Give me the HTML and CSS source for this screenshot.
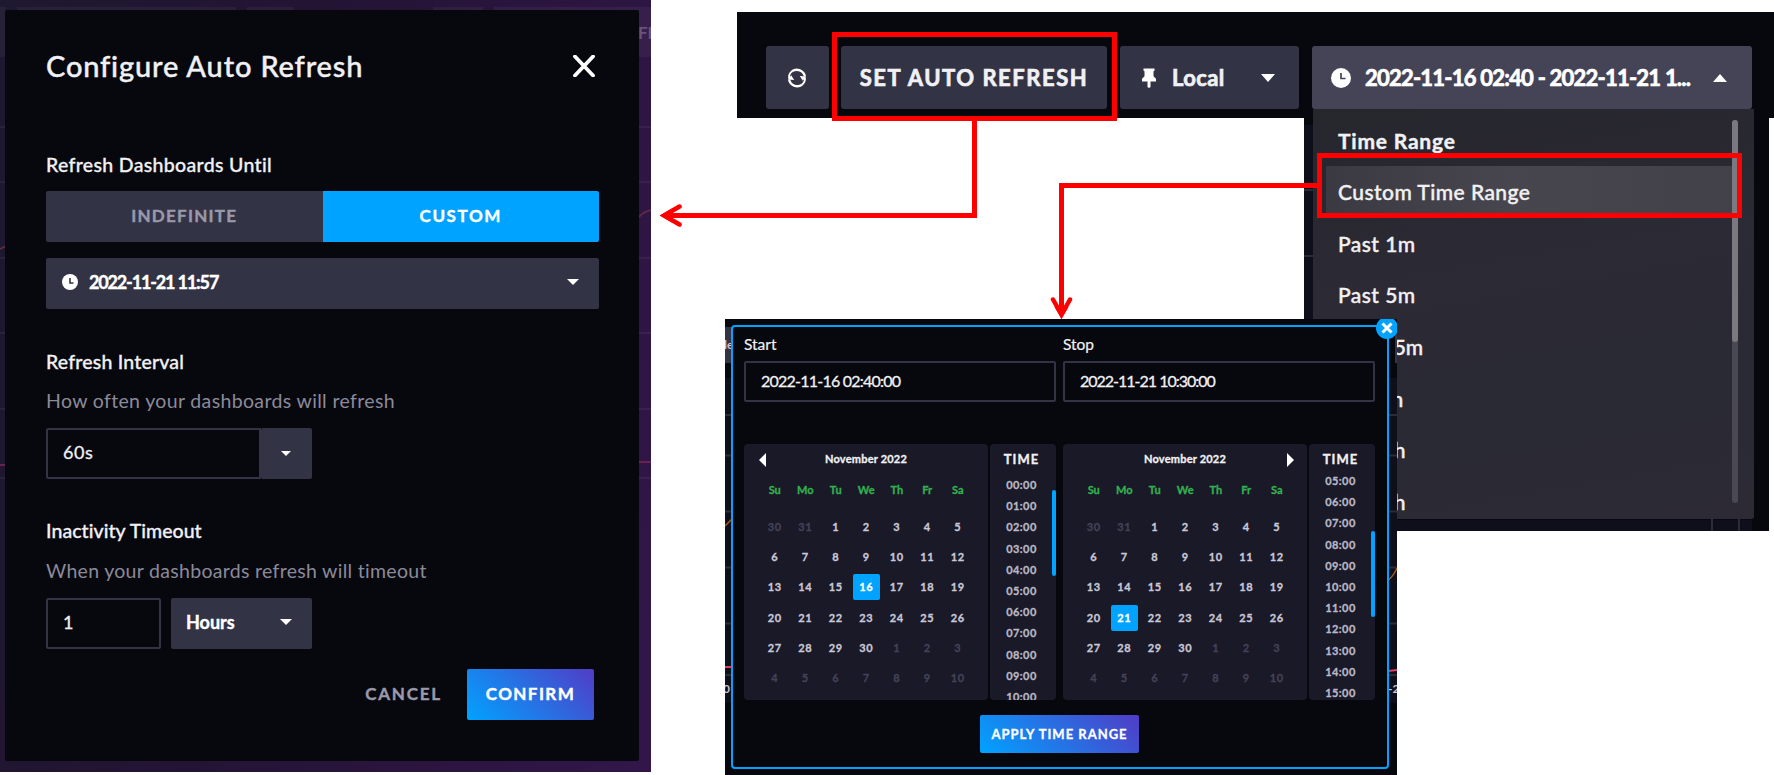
FILE: index.html
```
<!doctype html>
<html lang="en">
<head>
  <meta charset="UTF-8">
  <title>Auto Refresh</title>
  <link rel="stylesheet" href="styles.css">
</head>
<body>
  <div class="board">

    <!-- auto refresh dialog -->
    <div class="overlay">
      <svg class="overlay-bg" width="651" height="772" fill="none">
        <g fill="#fff" fill-opacity=".045">
          <path d="M0 7h6v50H0zM17 7h219v4H17zM247 7h47v4h-47zM433 7h50v4h-50zM494 7h157v50H494z"/>
        </g>
        <path d="M0 127h651M0 182h651M0 258h651M0 333h651M0 409h651M0 478h651" stroke="#fff" stroke-opacity=".05" stroke-width="2"/>
        <path d="M0 249l6-3M639 217q4-5 12-7" stroke="#6b2b45" stroke-width="1.5"/>
        <path d="M0 465h6M639 462h12" stroke="#6c2050" stroke-width="2"/>
      </svg>
      <span class="overlay-text">FR</span>
      <div class="modal">
        <div class="modal-head">
          <h1>Configure Auto Refresh</h1>
          <svg class="close" width="22" height="22" viewBox="0 0 22 22"><path d="M2 1.5L20 20.5M20 1.5L2 20.5" stroke="#fff" stroke-width="3.8" stroke-linecap="round"/></svg>
        </div>
        <h2>Refresh Dashboards Until</h2>
        <div class="toggle">
          <div>INDEFINITE</div>
          <div class="on">CUSTOM</div>
        </div>
        <div class="select until">
          <svg width="16" height="16" viewBox="0 0 16 16"><circle cx="8" cy="8" r="8" fill="#fff"/><path d="M8 4v5h3.5" stroke="#333346" stroke-width="1.6" fill="none"/></svg>
          <span class="until-date">2022-11-21 11:57</span>
          <i class="caret"></i>
        </div>
        <h2 class="group">Refresh Interval</h2>
        <p>How often your dashboards will refresh</p>
        <div class="row">
          <div class="input interval">60s</div>
          <div class="select drop"><i class="caret small"></i></div>
        </div>
        <h2 class="group timeout">Inactivity Timeout</h2>
        <p class="timeout-text">When your dashboards refresh will timeout</p>
        <div class="row">
          <div class="input amount">1</div>
          <div class="select unit">Hours<i class="caret"></i></div>
        </div>
        <div class="modal-foot">
          <span class="cancel">CANCEL</span>
          <span class="confirm">CONFIRM</span>
        </div>
      </div>
    </div>

    <!-- toolbar -->
    <div class="toolbar">
      <div class="btn refresh">
        <svg width="20" height="20" viewBox="0 0 20 20" fill="none" stroke="#fff" stroke-width="2.3"><path d="M5 3.3A8.3 8.3 0 0 1 17.9 8.5M15 16.7A8.3 8.3 0 0 1 2.1 11.5"/><path d="M2 10.5A8.3 8.3 0 0 1 5 3.3M18 9.5A8.3 8.3 0 0 1 15 16.7" stroke-width="1.8"/><path d="M.8 11.5l3.4-4.2 3 4.6zM19.2 8.5l-3.4 4.2-3-4.6z" fill="#fff" stroke="none"/></svg>
      </div>
      <div class="btn auto">SET AUTO REFRESH</div>
      <div class="btn zone">
        <svg width="14" height="20" viewBox="0 0 14 20"><path d="M1.5.5h11v2.2l-1 .6v5l2.500 2.400v2.800H8.500V19L7 20l-1.500-1V13.500H0v-2.800l2.500-2.400v-5l-1-.6z" fill="#fff"/></svg>
        <span>Local</span>
        <i class="caret big"></i>
      </div>
      <div class="btn range">
        <svg width="20" height="20" viewBox="0 0 20 20"><circle cx="10" cy="10" r="10" fill="#fff"/><path d="M10 5v5.5h4.500" stroke="#454457" stroke-width="1.7" fill="none"/></svg>
        <span>2022-11-16 02:40 - 2022-11-21 1...</span>
        <i class="caret big up"></i>
      </div>
    </div>

    <!-- time range menu -->
    <div class="menu-pane">
      <svg class="menu-bg" width="465" height="413"><path d="M0 7h10v406H0z" fill="#0f0e1b"/><path d="M0 402h448v11H0z" fill="#0f0e1b"/><path d="M0 72h10M0 138h10M408 400v13M435 400v13" stroke="#2c2b3c" stroke-width="2"/></svg>
      <ul class="menu">
        <li class="menu-title">Time Range</li>
        <li class="current">Custom Time Range</li>
        <li>Past 1m</li>
        <li>Past 5m</li>
        <li class="tight">Past 15m</li>
        <li class="tighter">Past 1h</li>
        <li class="tight">Past 3h</li>
        <li class="tight">Past 6h</li>
      </ul>
      <div class="menu-track"><div class="menu-thumb"></div></div>
    </div>

    <!-- date picker -->
    <div class="picker-pane">
      <svg class="picker-bg" width="672" height="456" fill="none">
        <path d="M0 59h672v325H0z" fill="#0f0e1b"/>
        <path d="M0 8h7v36H0zM670 8h2v36h-2z" fill="#333346"/>
        <path d="M0 96h672M0 136.5h672M0 192.5h672M0 248.5h672M0 304.5h672M0 356h672" stroke="#2c2b3c" stroke-width="2"/>
        <path d="M0 207l7-7M663 261q5-3 9-12" stroke="#a35a1f" stroke-width="1.5"/>
        <path d="M0 348h7M663 352l9-1" stroke="#e0405c" stroke-width="2"/>
      </svg>
      <span class="cut-le">le</span>
      <span class="cut-zero">0</span>
      <span class="cut-two">-2</span>
      <div class="picker">
        <div class="pickers">
          <div class="side">
            <label>Start</label>
            <div class="date-input start-input">2022-11-16 02:40:00</div>
            <div class="panels">
              <div class="calendar" data-day="16"><div class="month"><i class="prev"></i>November 2022</div></div>
              <div class="times" data-from="0"><b>TIME</b><div class="time-list"></div><div class="thumb"></div></div>
            </div>
          </div>
          <div class="side">
            <label>Stop</label>
            <div class="date-input stop-input">2022-11-21 10:30:00</div>
            <div class="panels">
              <div class="calendar" data-day="21"><div class="month">November 2022<i class="next"></i></div></div>
              <div class="times later" data-from="5"><b>TIME</b><div class="time-list"></div><div class="thumb"></div></div>
            </div>
          </div>
        </div>
        <div class="apply">APPLY TIME RANGE</div>
      </div>
      <svg class="picker-close" width="22" height="22" viewBox="0 0 22 22"><circle cx="11" cy="11" r="11" fill="#00a3ff"/><path d="M6.5 6.5l9 9M15.5 6.5l-9 9" stroke="#fff" stroke-width="3"/></svg>
    </div>

    <!-- callouts -->
    <svg class="callouts" width="1774" height="775" fill="none" stroke="#f00" stroke-width="5">
      <rect x="834.5" y="34.5" width="280" height="84"/>
      <rect x="1319.5" y="155.5" width="420" height="60"/>
      <path d="M974.5 121v94.5H666"/>
      <path d="M1317 185.5h-255.5V312"/>
      <path d="M679.5 206.5L664 215.5l15.5 9M1053 299.5l8.5 15 8.5-15" stroke-width="4.5" stroke-linecap="round"/>
      <path d="M660 215.5l12-7v14zM1061.5 319l-7-12h14z" fill="#f00" stroke="none"/>
    </svg>
  </div>

  <script>
    var names = ['Su', 'Mo', 'Tu', 'We', 'Th', 'Fr', 'Sa'],
        calendars = document.querySelectorAll('.calendar'),
        times = document.querySelectorAll('.times');

    calendars.forEach(function (cal) {
      var html = '<div class="week names">';
      names.forEach(function (n) { html += '<span>' + n + '</span>'; });
      html += '</div><div class="week days">';
      // six weeks, starting on October 30
      for (var i = -1; i <= 40; i++) {
        var day = i < 1 ? i + 31 : (i > 30 ? i - 30 : i),
            cls = i < 1 || i > 30 ? 'out' : (day == cal.dataset.day ? 'on' : '');
        html += '<span class="' + cls + '">' + day + '</span>';
      }
      cal.innerHTML += html + '</div>';
    });

    times.forEach(function (box) {
      var from = Number(box.dataset.from), html = '';
      for (var h = from; h <= from + 10; h++) {
        html += '<span>' + (h < 10 ? '0' + h : h) + ':00</span>';
      }
      box.querySelector('.time-list').innerHTML = html;
    });
  </script>
</body>
</html>
```
FILE: styles.css
```
* {
  margin: 0;
  padding: 0;
  box-sizing: border-box;
  list-style: none;
}

body {
  background: #fff;
  color: #f1f1f3;
  font-family: Lato, "Open Sans", sans-serif;
}

.board {
  position: relative;
  width: 1774px;
  height: 775px;
  overflow: hidden;
}

.caret {
  display: block;
  margin-left: auto;
  border: 6px solid transparent;
  border-top: 6px solid #fff;
  border-bottom: 0;
}
.caret.small { border-width: 5px 5px 0; }
.caret.big { border-width: 8px 7px 0; }
.caret.up { border-width: 0 7px 8px; border-bottom: 8px solid #fff; }

/* dialog */
.overlay {
  position: absolute;
  left: 0;
  top: 0;
  width: 651px;
  height: 772px;
  padding: 10px 12px 11px 5px;
  overflow: hidden;
  background: linear-gradient(100deg, #1e1830 0%, #231433 40%, #32164a 100%);
}
.overlay-bg { position: absolute; left: 0; top: 0; }
.overlay-text {
  position: absolute;
  left: 638px;
  top: 22px;
  color: #6a527c;
  font-size: 17px;
  font-weight: 700;
}
.modal {
  position: relative;
  height: 751px;
  padding: 38px 40px 0 41px;
  border-radius: 2px;
  background: #07070e;
}
.modal-head {
  display: flex;
  align-items: center;
  justify-content: space-between;
  height: 36px;
  margin-bottom: 69px;
}
.close { margin-right: 4px; }
h1 {
  font-size: 29px;
  font-weight: 500;
  line-height: 36px;
  letter-spacing: .84px;
  -webkit-text-stroke: .4px;
}
h2 {
  font-size: 19.5px;
  font-weight: 500;
  line-height: 24px;
  letter-spacing: .33px;
  -webkit-text-stroke: .3px;
}
h2.group { margin-top: 40.5px; letter-spacing: .19px; }
h2.timeout { letter-spacing: .05px; }
.modal p {
  margin: 15.5px 0 14.5px;
  color: #8b8a99;
  font-size: 19.5px;
  line-height: 24px;
  letter-spacing: .35px;
}
.modal .timeout-text { margin-bottom: 15px; letter-spacing: .3px; }
.toggle {
  display: flex;
  height: 51px;
  margin: 14px 0 16px;
  border-radius: 2px;
  overflow: hidden;
  font-size: 17px;
  font-weight: 700;
  line-height: 50px;
  text-align: center;
}
.toggle div { flex: 1; background: #333346; color: #9a99aa; letter-spacing: 1.26px; -webkit-text-stroke: .4px; }
.toggle .on { background: #00a3ff; color: #fff; letter-spacing: 1.6px; }
.select {
  display: flex;
  align-items: center;
  height: 51px;
  border-radius: 2px;
  background: #333346;
  color: #fff;
  font-size: 18px;
  font-weight: 700;
  -webkit-text-stroke: .4px;
}
.until { padding: 0 20px 4px 16px; }
.until-date { margin-left: 11px; letter-spacing: -1.16px; }
.row { display: flex; }
.input {
  height: 51px;
  padding-left: 15px;
  border: 2px solid #333346;
  border-radius: 2px;
  font-size: 18px;
  line-height: 45px;
  letter-spacing: .6px;
  -webkit-text-stroke: .3px;
}
.interval { width: 216px; border-right-width: 3px; }
.drop { width: 50px; padding-right: 21px; border-radius: 0 2px 2px 0; }
.amount { width: 115px; }
.unit { width: 141px; margin-left: 10px; padding: 0 20px 3px 15px; }
.modal-foot {
  display: flex;
  justify-content: flex-end;
  margin: 20px 5px 0 0;
  font-size: 17px;
  font-weight: 700;
  line-height: 49px;
  -webkit-text-stroke: .4px;
}
.cancel { margin-right: 25px; color: #9a99aa; letter-spacing: 1.8px; }
.confirm {
  width: 127px;
  height: 51px;
  border-radius: 2px;
  background: linear-gradient(45deg, #00a3ff, #513cc6);
  color: #fff;
  letter-spacing: 1.42px;
  text-align: center;
}

/* toolbar */
.toolbar {
  position: absolute;
  left: 737px;
  top: 12px;
  display: flex;
  width: 1037px;
  height: 106px;
  padding: 34px 0 0 29px;
  background: #07070e;
}
.btn {
  display: flex;
  align-items: center;
  justify-content: center;
  height: 63px;
  border-radius: 3px;
  background: #333346;
  font-size: 22px;
  font-weight: 700;
  -webkit-text-stroke: .7px;
}
.refresh { width: 63px; padding-right: 1px; }
.auto { width: 266px; margin-left: 12px; letter-spacing: 1.54px; }
.zone { width: 179px; margin: 0 13px; padding: 0 24px 0 22px; justify-content: flex-start; }
.zone span { margin-left: 16px; letter-spacing: .4px; }
.range { width: 440px; padding: 0 25px 0 19px; background: #454457; color: #fff; }
.range span { margin-left: 14px; letter-spacing: -.78px; white-space: nowrap; }

/* time range menu */
.menu-pane {
  position: absolute;
  left: 1304px;
  top: 118px;
  width: 465px;
  height: 413px;
  padding-left: 9px;
  background: #07070e;
}
.menu-bg { position: absolute; left: 0; top: 0; }
/* starts right under the range button */
.menu {
  position: relative;
  width: 441px;
  height: 410px;
  margin-top: -9px;
  padding: 9px 18px 0 13px;
  border-radius: 0 0 3px 3px;
  overflow: hidden;
  background: linear-gradient(170deg, #26262d 0%, #2c2a34 40%, #2a2a34 70%, #2d2a34 100%);
}
.menu li {
  height: 51.7px;
  padding-left: 12px;
  font-size: 21px;
  font-weight: 500;
  line-height: 51px;
  letter-spacing: .45px;
  -webkit-text-stroke: .4px;
}
.menu .menu-title {
  height: 48px;
  line-height: 46px;
  font-weight: 700;
  letter-spacing: .8px;
}
.menu .current { background: linear-gradient(90deg, #3b3a42, #47464e 45%, #424149); line-height: 52px; }
.menu .tight { letter-spacing: -.2px; }
.menu .tighter { letter-spacing: -.6px; }
.menu-track {
  position: absolute;
  right: 31px;
  top: 2px;
  width: 6px;
  height: 383px;
  border-radius: 3px;
  background: #4a4953;
}
.menu-thumb { height: 222px; border-radius: 3px; background: #79797f; }

/* date picker */
.picker-pane {
  position: absolute;
  left: 725px;
  top: 319px;
  width: 672px;
  height: 456px;
  padding: 6px 8px 6px 6px;
  overflow: hidden;
  background: #07070e;
}
.picker-bg { position: absolute; left: 0; top: 0; }
.cut-le, .cut-zero, .cut-two {
  position: absolute;
  color: #c6c5d0;
  font-size: 12px;
  font-weight: 700;
}
.cut-le { left: -1px; top: 18px; }
.cut-zero { left: -2px; top: 362px; }
.cut-two { left: 663px; top: 362px; }
.picker {
  position: relative;
  height: 444px;
  padding: 8px 11px 0;
  border: 2px solid #00a3ff;
  border-radius: 4px;
  background: #07070e;
}
.pickers { display: flex; gap: 7px; }
.side { width: 312px; }
.side label {
  display: block;
  height: 26px;
  font-size: 15.5px;
  line-height: 18px;
  -webkit-text-stroke: .2px;
}
.date-input {
  height: 41px;
  margin-bottom: 42px;
  padding-left: 15px;
  border: 2px solid #333346;
  border-radius: 2px;
  font-size: 16px;
  line-height: 35px;
  letter-spacing: -.77px;
  -webkit-text-stroke: .3px;
}
.stop-input { letter-spacing: -1px; }
.panels { display: flex; gap: 2px; }
.calendar {
  width: 244px;
  height: 256px;
  border-radius: 4px;
  background: #1a1928;
  font-size: 11px;
  font-weight: 700;
  text-align: center;
  -webkit-text-stroke: .3px;
}
.month { position: relative; padding-top: 6px; line-height: 18px; letter-spacing: .2px; }
.prev, .next {
  position: absolute;
  top: 9px;
  border: 7px solid transparent;
}
.prev { left: 15px; border-left: 0; border-right-color: #fff; }
.next { right: 13px; border-right: 0; border-left-color: #fff; }
.week { display: grid; grid-template-columns: repeat(7, 30.5px); padding-left: 15.5px; }
.names { padding-top: 13px; color: #32b14f; line-height: 18px; }
.days { padding-top: 12.5px; }
.week span { justify-self: center; }
.days span {
  width: 27px;
  height: 26px;
  margin: 2px 0 2.4px;
  border-radius: 2px;
  color: #c9c8d6;
  line-height: 26px;
  letter-spacing: .5px;
}
.days .out { color: #434257; }
.days .on { background: #00a3ff; color: #fff; }
.times {
  position: relative;
  width: 66px;
  height: 256px;
  padding: 6px 3px 0 0;
  border-radius: 4px;
  overflow: hidden;
  background: #1a1928;
  text-align: center;
  -webkit-text-stroke: .3px;
}
.times b { display: block; font-size: 13px; line-height: 19px; letter-spacing: 1px; }
.time-list { margin-top: 5px; }
.later .time-list { margin-top: 1px; }
.time-list span {
  display: block;
  height: 21.2px;
  color: #b9b8c6;
  font-size: 11px;
  font-weight: 700;
  line-height: 21px;
  letter-spacing: .4px;
}
.thumb {
  position: absolute;
  right: 0;
  top: 46px;
  width: 4px;
  height: 86px;
  border-radius: 2px;
  background: #00a3ff;
}
.later .thumb { top: 87px; }
.apply {
  width: 159px;
  height: 38px;
  margin: 15px 0 0 236px;
  border-radius: 2px;
  background: linear-gradient(45deg, #00a3ff, #513cc6);
  color: #fff;
  font-size: 13px;
  font-weight: 700;
  line-height: 38px;
  letter-spacing: 1px;
  text-align: center;
  -webkit-text-stroke: .3px;
}
.picker-close { position: absolute; left: 650.5px; top: -2.5px; }

.callouts { position: absolute; left: 0; top: 0; }
```
